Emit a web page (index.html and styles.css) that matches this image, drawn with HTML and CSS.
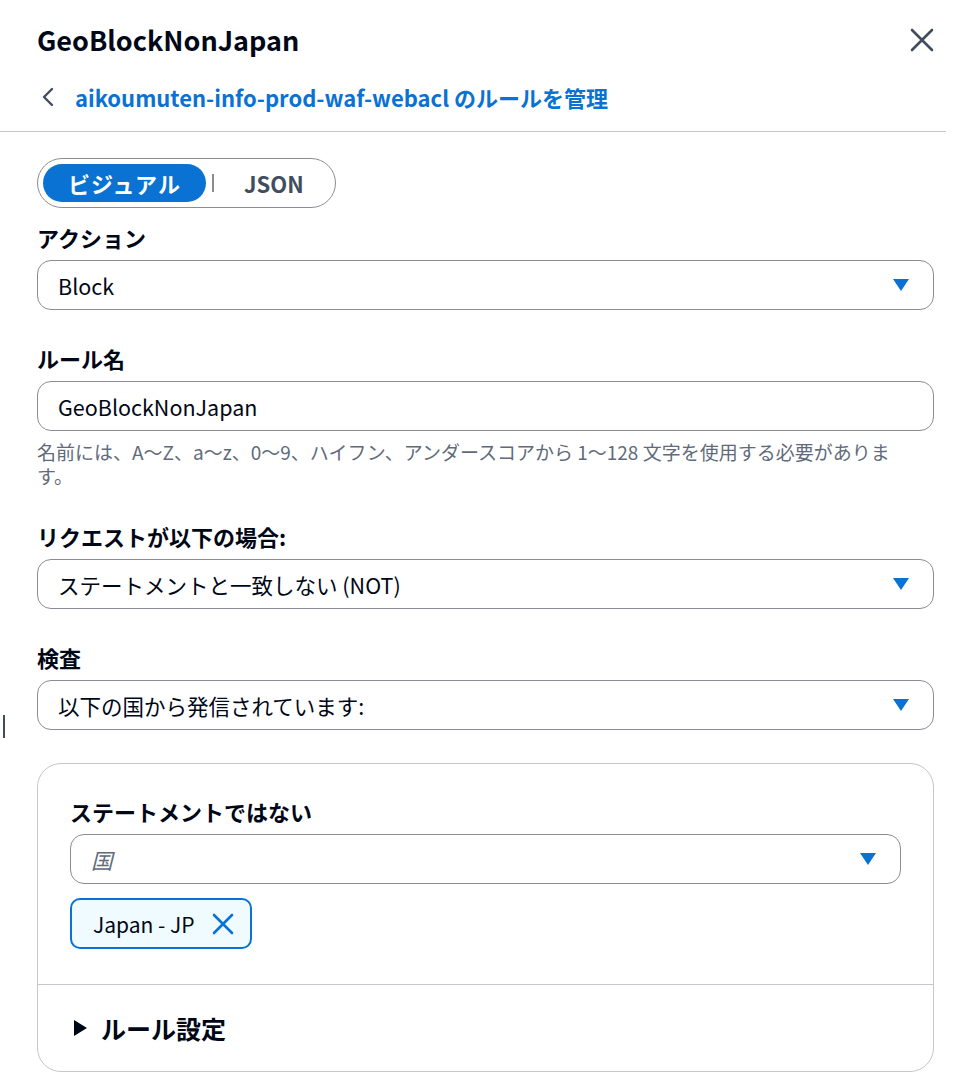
FILE: index.html
```html
<!DOCTYPE html>
<html lang="ja">
<head>
    <meta charset="UTF-8">
    <meta name="viewport" content="width=device-width, initial-scale=1.0">
    <title>GeoBlockNonJapan</title>
    <link rel="stylesheet" href="styles.css">
</head>
<body>

    <div class="panel">
        <header class="panel-header">
            <div class="title-row">
                <h1 class="title">GeoBlockNonJapan</h1>
                <button class="close-btn" aria-label="閉じる">
                    <svg width="24" height="24" viewBox="0 0 24 24">
                        <path d="M2 2 L22 22 M22 2 L2 22" stroke="#414d5c" stroke-width="2.6" stroke-linecap="round" fill="none"/>
                    </svg>
                </button>
            </div>
            <a href="#" class="back-link">
                <svg class="back-icon" width="14" height="20" viewBox="0 0 14 20">
                    <path d="M11 2 L3 10 L11 18" stroke="#414d5c" stroke-width="2.4" stroke-linecap="round" stroke-linejoin="round" fill="none"/>
                </svg>
                <span>aikoumuten-info-prod-waf-webacl のルールを管理</span>
            </a>
        </header>

        <div class="panel-body">
            <div class="segmented">
                <button class="segment active">ビジュアル</button>
                <span class="segment-sep"></span>
                <button class="segment">JSON</button>
            </div>

            <div class="field first">
                <label class="field-label">アクション</label>
                <div class="select">
                    <span>Block</span>
                    <span class="caret"></span>
                </div>
            </div>

            <div class="field">
                <label class="field-label">ルール名</label>
                <div class="input">GeoBlockNonJapan</div>
                <p class="hint">名前には、A〜Z、a〜z、0〜9、ハイフン、アンダースコアから 1〜128 文字を使用する必要があります。</p>
            </div>

            <div class="field">
                <label class="field-label">リクエストが以下の場合:</label>
                <div class="select">
                    <span>ステートメントと一致しない (NOT)</span>
                    <span class="caret"></span>
                </div>
            </div>

            <div class="field">
                <label class="field-label">検査</label>
                <div class="select">
                    <span>以下の国から発信されています:</span>
                    <span class="caret"></span>
                </div>
            </div>

            <div class="card">
                <div class="card-main">
                    <label class="field-label">ステートメントではない</label>
                    <div class="select">
                        <span class="placeholder">国</span>
                        <span class="caret"></span>
                    </div>
                    <div class="token">
                        <span>Japan - JP</span>
                        <svg width="22" height="22" viewBox="0 0 22 22">
                            <path d="M2 2 L20 20 M20 2 L2 20" stroke="#0972d3" stroke-width="2.6" stroke-linecap="round" fill="none"/>
                        </svg>
                    </div>
                </div>
                <div class="card-footer">
                    <span class="expand-arrow"></span>
                    <span>ルール設定</span>
                </div>
            </div>
        </div>

        <span class="text-cursor"></span>
    </div>

</body>
</html>
```

FILE: styles.css
```css
body, html {
    margin: 0;
    padding: 0;
    background: #ffffff;
    font-family: "Noto Sans CJK JP", "Noto Sans", sans-serif;
    color: #000716;
}

.panel {
    position: relative;
    width: 972px;
    min-height: 1088px;
}

.panel-header {
    padding: 22px 38px 20px 37px;
    border-bottom: 1px solid #c6c6cd;
    margin-right: 26px;
}

.title-row {
    display: flex;
    justify-content: space-between;
    align-items: center;
    margin-right: -26px;
}

.title {
    margin: 0;
    font-size: 27px;
    line-height: 36px;
    font-weight: 700;
}

.close-btn {
    border: none;
    background: none;
    padding: 0;
    width: 24px;
    height: 24px;
    display: flex;
    align-items: center;
    justify-content: center;
}

.back-link {
    display: flex;
    align-items: center;
    gap: 20px;
    margin-top: 25px;
    margin-left: 4px;
    height: 28px;
    color: #0972d3;
    font-size: 22px;
    font-weight: 700;
    text-decoration: none;
}

.panel-body {
    padding: 26px 38px 0 37px;
}

/* visual / json switch */
.segmented {
    display: inline-flex;
    align-items: center;
    box-sizing: border-box;
    height: 50px;
    padding: 0 5px;
    border: 1px solid #8c8c94;
    border-radius: 25px;
}

.segment {
    border: none;
    background: none;
    font-family: inherit;
    font-size: 22px;
    font-weight: 700;
    color: #414d5c;
    height: 38px;
    border-radius: 19px;
    padding: 0;
}

.segment.active {
    background: #0972d3;
    color: #ffffff;
    width: 163px;
    letter-spacing: 1px;
}

.segment-sep {
    width: 2px;
    height: 18px;
    background: #8c8c94;
    margin: 0 4px 0 6px;
}

.segment:last-child {
    padding: 0 26px;
}

.field {
    margin-top: 34px;
}

.field.first {
    margin-top: 15px;
}

.field-label {
    display: block;
    font-size: 22px;
    line-height: 28px;
    font-weight: 700;
    margin-bottom: 9px;
}

.select, .input {
    display: flex;
    align-items: center;
    justify-content: space-between;
    box-sizing: border-box;
    height: 50px;
    padding: 0 24px 0 20px;
    border: 1px solid #8c8c94;
    border-radius: 14px;
    font-size: 21.5px;
}

.caret {
    width: 0;
    height: 0;
    border-left: 8px solid transparent;
    border-right: 8px solid transparent;
    border-top: 12px solid #0972d3;
}

.hint {
    margin: 9px 20px 0 0;
    font-size: 19px;
    line-height: 24px;
    color: #5f6b7a;
}

.card {
    margin-top: 33px;
    border: 1px solid #c6c6cd;
    border-radius: 24px;
}

.card-main {
    padding: 33px 32px 35px 32px;
    border-bottom: 1px solid #c6c6cd;
}

.placeholder {
    color: #5f6b7a;
    font-style: italic;
}

.token {
    display: inline-flex;
    align-items: center;
    gap: 17px;
    margin-top: 14px;
    height: 51px;
    box-sizing: border-box;
    padding: 0 16px 0 21px;
    border: 2px solid #0972d3;
    border-radius: 10px;
    background: #f0fbff;
    font-size: 21px;
}

.card-footer {
    display: flex;
    align-items: center;
    gap: 14px;
    height: 86px;
    padding-left: 36px;
    font-size: 25px;
    font-weight: 700;
}

.expand-arrow {
    width: 0;
    height: 0;
    border-top: 8px solid transparent;
    border-bottom: 8px solid transparent;
    border-left: 13px solid #000716;
}

.text-cursor {
    position: absolute;
    left: 3px;
    top: 715px;
    width: 2px;
    height: 23px;
    background: #414d5c;
}
```
